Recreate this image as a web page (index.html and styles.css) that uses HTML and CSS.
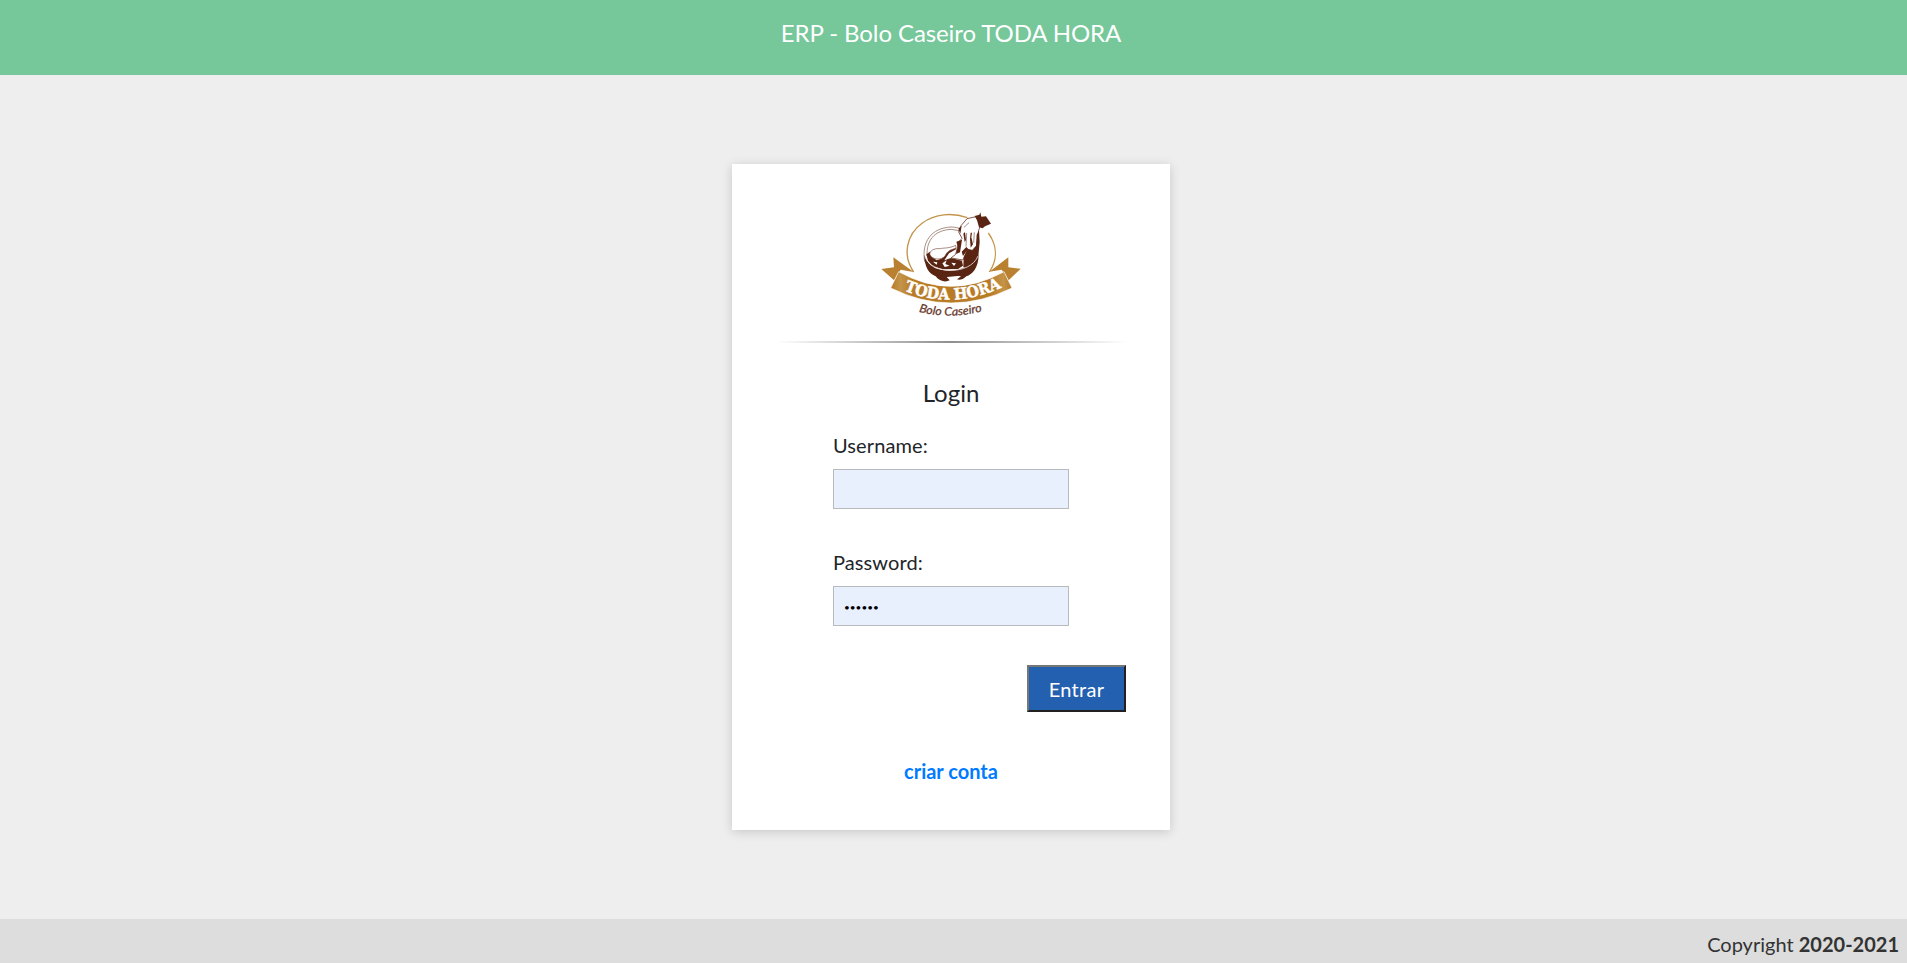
FILE: index.html
```html
<!DOCTYPE html>
<html lang="pt-BR">
<head>
<meta charset="utf-8">
<title>ERP - Bolo Caseiro TODA HORA</title>
<link rel="stylesheet" href="styles.css">
</head>
<body>
<header class="topbar">ERP - Bolo Caseiro TODA HORA</header>
<main class="content">
  <section class="card">
    <svg class="logo" viewBox="0 0 486 390" role="img" aria-label="Toda Hora Bolo Caseiro">
      <defs>
        <linearGradient id="gold" x1="0" x2="1" y1="0" y2="0">
          <stop offset="0" stop-color="#b67a25"/>
          <stop offset=".08" stop-color="#c4944a"/>
          <stop offset=".18" stop-color="#b87c27"/>
          <stop offset=".82" stop-color="#b87c27"/>
          <stop offset=".93" stop-color="#c4944a"/>
          <stop offset="1" stop-color="#b67a25"/>
        </linearGradient>
        <path id="name-arc" d="M102 271Q243 331 396 262"/>
        <path id="tag-arc" d="M146 335Q240 360 340 333"/>
      </defs>
      <!-- ring -->
      <g fill="none" stroke="#c3954b" stroke-width="4">
        <path d="M131 216C96 165 110 103 157 69C195 41 246 37 292 53"/>
        <path d="M355 99C382 137 383 179 358 216"/>
      </g>
      <!-- bowl rim -->
      <g fill="none" stroke="#aa8f85" stroke-width="3">
        <path d="M164 185C154 125 184 84 243 81C256 81 266 84 276 88"/>
        <path d="M171 168C169 121 193 91 243 88L274 93"/>
      </g>
      <!-- bowl -->
      <path fill="#5a2413" d="M163 165C171 191 190 206 213 209C254 218 299 207 326 166C325 204 307 224 289 229C279 240 267 240 261 238L273 229C258 226 248 230 230 231L239 241C226 248 207 243 197 229C176 221 163 199 163 165Z"/>
      <!-- batter and spoon -->
      <path fill="#5a2413" d="M169 163L180 155L187 171L200 181L214 176L231 151L258 141L258 148L237 160L223 181L243 174L276 182L279 197L264 207L218 208L188 199L174 182Z"/>
      <path fill="#fff" stroke="#7b5042" stroke-width="2" d="M180 164C177 153 192 144 211 146C220 143 237 146 257 136L258 145C240 149 231 155 225 168C215 181 187 180 180 164Z"/>
      <path fill="#fff" d="M217 190L230 181L226 192L239 197L224 201ZM244 188L258 190L252 198ZM189 185L202 187L200 194Z"/>
      <!-- hand and sleeve -->
      <path fill="#fff" stroke="#6b3a29" stroke-width="2.5" d="M291 56L318 50C335 63 331 79 326 91L320 137L307 151L293 148L279 180L243 174L257 163L266 126L276 115L266 96L273 77Z"/>
      <path fill="#5a2413" d="M314 48L328 44L331 37L334 50L348 49L363 71L345 79L338 85L327 82L321 61Z"/>
      <path fill="#5a2413" d="M327 91L329 126L325 169L306 200L280 202L281 171L293 148L307 151L318 138L320 104Z"/>
      <path fill="#5a2413" d="M276 119L270 157L258 162L263 139L259 125ZM285 96L288 120L284 126L280 101ZM302 98L306 98L304 112L309 133L302 143L300 117ZM265 86L275 77L271 101ZM289 141L295 147L279 168L275 155Z"/>
      <path fill="none" stroke="#7b5042" stroke-width="2" d="M290 99L288 140M313 97L311 128M297 68L282 82"/>
      <path fill="none" stroke="#e9dfdb" stroke-width="2.5" d="M166 172C183 222 300 228 324 168"/>
      <!-- ribbon -->
      <path fill="#b9802f" d="M131 216L70 172L72 202L34 207L72 241L92 209ZM358 215L415 172L415 202L452 206L416 241L395 209Z"/>
      <path fill="url(#gold)" stroke="#fff" stroke-width="2" d="M86 215Q243 303 402 215L426 264Q243 354 62 264Z"/>
      <text class="brand"><textPath href="#name-arc" textLength="302" lengthAdjust="spacingAndGlyphs">TODA HORA</textPath></text>
      <text class="tagline"><textPath href="#tag-arc" textLength="193" lengthAdjust="spacingAndGlyphs">Bolo Caseiro</textPath></text>
    </svg>
    <div class="divider"></div>
    <h1 class="title">Login</h1>
    <form class="form">
      <div class="field">
        <label class="label" for="user">Username:</label>
        <input class="input" id="user" type="text">
      </div>
      <div class="field">
        <label class="label" for="pass">Password:</label>
        <input class="input input-secret" id="pass" type="password" value="123456">
      </div>
      <button class="submit" type="button">Entrar</button>
    </form>
    <a class="signup" href="#">criar conta</a>
  </section>
</main>
<footer class="footer">Copyright&nbsp;<span class="years">2020-2021</span></footer>
</body>
</html>
```

FILE: styles.css
```css
* { box-sizing: border-box; }
body {
  margin: 0;
  height: 963px;
  display: flex;
  flex-direction: column;
  overflow: hidden;
  background: #eee;
  color: #212529;
  font-family: Lato, sans-serif;
  font-size: 20px;
  line-height: 30px;
}
.topbar {
  height: 75px;
  padding: 15px 5px 0 0;
  background: #76c79a;
  color: #fff;
  font-size: 24px;
  letter-spacing: -.1px;
  line-height: 36px;
  text-align: center;
}
.content {
  flex: 1;
  display: flex;
  justify-content: center;
  align-items: flex-start;
  padding: 89px 5px 0 0;
}
.card {
  width: 438px;
  height: 666px;
  padding: 36px 44px 0;
  display: flex;
  flex-direction: column;
  align-items: center;
  background: #fff;
  box-shadow: 0 2px 10px rgba(0, 0, 0, .16);
}
.logo { width: 162px; height: 130px; flex: none; }
.brand {
  fill: #fff;
  stroke: #fff;
  stroke-width: 1.5px;
  font-family: "DejaVu Serif", serif;
  font-size: 47px;
  font-weight: bold;
}
.tagline {
  fill: #67382b;
  stroke: #67382b;
  stroke-width: .8px;
  font-family: Lato, sans-serif;
  font-size: 35px;
  font-style: italic;
}
.divider {
  width: 350px;
  height: 2px;
  margin-top: 11px;
  background: linear-gradient(to right, transparent, #8f8f8f, transparent);
}
.title {
  margin: 32px 0 0;
  font-size: 24px;
  font-weight: 400;
  line-height: 36px;
}
.form {
  width: 350px;
  display: flex;
  flex-direction: column;
  align-items: center;
  margin-top: 19px;
}
.field {
  width: 236px;
  height: 117px;
  display: flex;
  flex-direction: column;
  gap: 9px;
}
.label { height: 30px; letter-spacing: .1px; }
.input {
  width: 236px;
  height: 40px;
  padding: 0 10px;
  border: 1px solid #b8babd;
  border-radius: 0;
  background: #e8f0fe;
  color: #000;
  font: 20px Lato, sans-serif;
}
.input-secret { padding-top: 2px; font-size: 10px; }
.submit {
  width: 99px;
  height: 47px;
  align-self: flex-end;
  margin-top: 1px;
  padding: 0;
  border: 2px solid;
  border-color: #767676 #212121 #212121 #767676;
  background: #2460b0;
  color: #fff;
  font: 20px Lato, sans-serif;
  letter-spacing: .3px;
}
.signup {
  margin-top: 44px;
  color: #007bff;
  font-weight: 700;
  text-decoration: none;
}
.footer {
  height: 44px;
  display: flex;
  justify-content: flex-end;
  padding: 10px 8px 0 0;
  background: #ddd;
  color: #333;
}
.years { font-weight: 700; }
```
